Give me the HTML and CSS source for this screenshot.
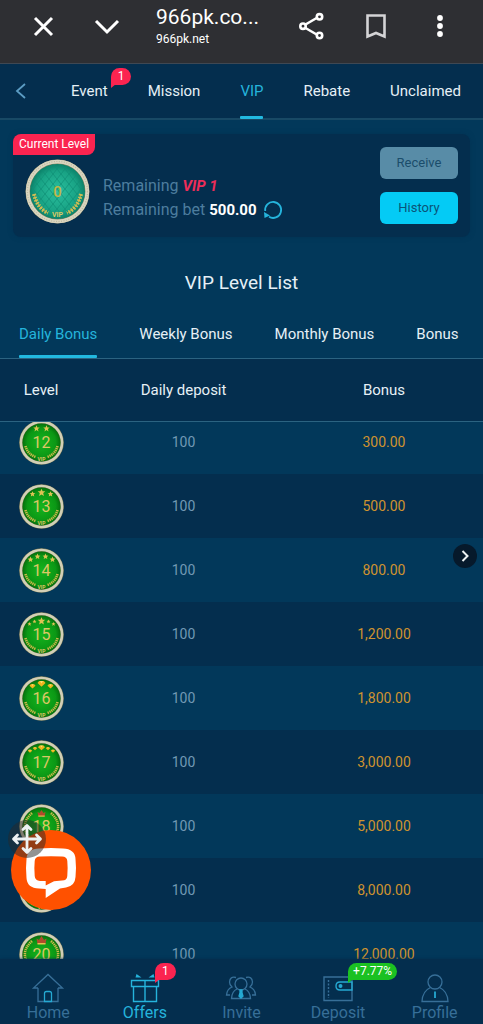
FILE: index.html
```html
<!DOCTYPE html>
<html lang="en">
<head>
  <meta charset="UTF-8">
  <meta name="viewport" content="width=device-width, initial-scale=1.0">
  <title>VIP Level List</title>
  <link rel="stylesheet" href="styles.css">
</head>
<body>
  <div class="app">
    <!-- Browser bar -->
    <header class="browser-bar">
      <div class="bar-group">
        <button class="bar-button" aria-label="Close">
          <svg viewBox="0 0 24 24" fill="none" stroke="currentColor" stroke-width="3"><path d="M4 4l17 17M21 4L4 21"></path></svg>
        </button>
        <button class="bar-button" aria-label="Minimize">
          <svg viewBox="0 0 24 24" fill="none" stroke="currentColor" stroke-width="3"><path d="M1 7l11 11L23 7"></path></svg>
        </button>
      </div>
      <div class="bar-title">
        <div class="site-title">966pk.co...</div>
        <div class="site-url">966pk.net</div>
      </div>
      <div class="bar-group">
        <button class="bar-button" aria-label="Share">
          <svg viewBox="0 0 24 24" fill="none" stroke="currentColor" stroke-width="2.6">
            <path d="M5.5 10.500l12-7M5.500 14l12 7"></path>
            <circle cx="3" cy="12.200" r="2.700"></circle>
            <circle cx="19.500" cy="2.800" r="2.700"></circle>
            <circle cx="19.500" cy="21.500" r="2.700"></circle>
          </svg>
        </button>
        <button class="bar-button bookmark" aria-label="Bookmark">
          <svg viewBox="0 0 24 24" fill="none" stroke="currentColor" stroke-width="2.600"><path d="M3.500 1.500h17V22.500L12 19 3.500 22.500z"></path></svg>
        </button>
        <button class="bar-button" aria-label="More">
          <svg viewBox="0 0 24 24" fill="currentColor"><circle cx="12" cy="4" r="2.900"></circle><circle cx="12" cy="12" r="2.900"></circle><circle cx="12" cy="20" r="2.900"></circle></svg>
        </button>
      </div>
    </header>

    <!-- Main tabs -->
    <nav class="main-tabs">
      <a href="#" class="back" aria-label="Back">
        <svg viewBox="0 0 16 16" fill="none" stroke="currentColor" stroke-width="1.800"><path d="M12 1L4 8l8 7"></path></svg>
      </a>
      <a href="#" class="tab">Event<span class="badge event-badge">1</span></a>
      <a href="#" class="tab">Mission</a>
      <a href="#" class="tab active">VIP</a>
      <a href="#" class="tab">Rebate</a>
      <a href="#" class="tab">Unclaimed</a>
    </nav>

    <!-- Current level -->
    <section class="level-card">
      <span class="level-tag">Current Level</span>
      <svg class="current-coin" viewBox="0 0 65 65">
        <defs>
          <radialGradient id="teal"><stop offset="0" stop-color="#2abf9e"></stop><stop offset="0.750" stop-color="#18a284"></stop><stop offset="1" stop-color="#0b8068"></stop></radialGradient>
          <radialGradient id="green"><stop offset="0" stop-color="#15b41d"></stop><stop offset="0.750" stop-color="#0b9815"></stop><stop offset="1" stop-color="#066f0c"></stop></radialGradient>
          <pattern id="quilt" width="8" height="10" patternUnits="userSpaceOnUse"><path d="M0 0l8 10M8 0L0 10" stroke="#0f8d74" stroke-width="0.700"></path></pattern>
        </defs>
        <circle cx="32.500" cy="32.500" r="32" fill="#8b8763"></circle>
        <circle cx="32.500" cy="32.500" r="29.800" fill="none" stroke="#d9d5c0" stroke-width="3.800"></circle>
        <circle cx="32.500" cy="32.500" r="30" fill="none" stroke="#bdb99e" stroke-width="1.200" stroke-dasharray="1 1.500"></circle>
        <circle cx="32.500" cy="32.500" r="27.500" fill="url(#teal)"></circle>
        <circle cx="32.500" cy="32.500" r="27.500" fill="url(#quilt)"></circle>
        <path d="M9 35q3 14 14 19M56 35q-3 14-14 19" fill="none" stroke="#c8b34a" stroke-width="1"></path>
        <path d="M9 35q3 14 14 19M56 35q-3 14-14 19" fill="none" stroke="#d0bc55" stroke-width="4" stroke-dasharray="1.600 1.400"></path>
        <text x="32.500" y="38" class="coin-zero">0</text>
        <text x="32.500" y="58" class="coin-label">VIP</text>
      </svg>
      <div class="remaining">
        <p>Remaining <em>VIP 1</em></p>
        <p>Remaining bet <strong>500.00</strong>
          <button class="refresh" aria-label="Refresh">
            <svg viewBox="0 0 20 20" fill="none" stroke="currentColor" stroke-width="1.800"><path d="M2.200 11A8 8 0 1 1 6 16.800"></path><path d="M1 12l.5 6 5.500-2.500z" fill="currentColor" stroke="none"></path></svg>
          </button>
        </p>
      </div>
      <div class="card-actions">
        <button class="action receive">Receive</button>
        <button class="action history">History</button>
      </div>
    </section>

    <h1 class="list-title">VIP Level List</h1>

    <nav class="sub-tabs">
      <a href="#" class="tab active">Daily Bonus</a>
      <a href="#" class="tab">Weekly Bonus</a>
      <a href="#" class="tab">Monthly Bonus</a>
      <a href="#" class="tab">Bonus</a>
    </nav>

    <div class="level-scroll" id="level-scroll">
      <table class="level-table">
        <thead>
          <tr><th class="col-level">Level</th><th class="col-deposit">Daily deposit</th><th>Bonus</th></tr>
        </thead>
        <tbody id="level-rows">
          <!-- Level rows are rendered below -->
        </tbody>
      </table>
    </div>

    <!-- Bottom navigation -->
    <nav class="bottom-nav">
      <a href="#" class="nav-item">
        <svg class="nav-icon" viewBox="0 0 32 30" fill="none" stroke="currentColor" stroke-width="1.300">
          <path d="M6 15v13.500h20V15M6 15H1.500L16 1.500 30.500 15H26"></path>
          <path class="accent" d="M12.500 28.500v-8q0-2 2-2h3q2 0 2 2v8z"></path>
        </svg>
        Home
      </a>
      <a href="#" class="nav-item active">
        <svg class="nav-icon" viewBox="0 0 32 30" fill="none" stroke="currentColor" stroke-width="1.400">
          <path d="M2.500 7.500h27v6h-27zM4.500 13.500v15h23v-15M16 7.500v21"></path>
          <path d="M6.500 4.500l1-3.500 5 3.500zM19.500 4.500l5-3.500 1 3.500z" fill="currentColor" stroke="none"></path>
        </svg>
        Offers
        <span class="badge nav-badge">1</span>
      </a>
      <a href="#" class="nav-item">
        <svg class="nav-icon" viewBox="0 0 32 30" fill="none" stroke="currentColor" stroke-width="1.300">
          <circle cx="16" cy="11" r="6"></circle>
          <path d="M12 16q-5 2-5.500 9.500h19q-.5-7.500-5.500-9.500"></path>
          <path d="M11 4.500Q5 3 4.500 9q0 3 2.500 5-5 2-5.500 8H5M21 4.500q6-1.500 6.500 4.500 0 3-2.500 5 5 2 5.500 8H27"></path>
          <path class="accent fill" d="M15 17h2v3l1 3-2 2-2-2 1-3z"></path>
        </svg>
        Invite
      </a>
      <a href="#" class="nav-item">
        <svg class="nav-icon" viewBox="0 0 32 30" fill="none" stroke="currentColor" stroke-width="1.400">
          <path d="M2 4h28v23.500H2z"></path>
          <path d="M6.500 7v18" stroke-dasharray="2 1.500"></path>
          <path class="accent" d="M30 9H18q-4 0-4 4t4 4h12z"></path>
          <circle class="accent fill" cx="18.500" cy="13" r="1.300"></circle>
        </svg>
        Deposit
        <span class="badge nav-badge green">+7.77%</span>
      </a>
      <a href="#" class="nav-item">
        <svg class="nav-icon" viewBox="0 0 32 30" fill="none" stroke="currentColor" stroke-width="1.300">
          <circle cx="16" cy="9" r="7"></circle>
          <path d="M11.500 14.500Q3.500 18 3 28.500h26q-.5-10.500-8.500-14"></path>
          <path class="accent" stroke-width="1.800" d="M16 18.500v6.500"></path>
        </svg>
        Profile
      </a>
    </nav>
  </div>

  <!-- Floating buttons -->
  <button class="side-arrow" aria-label="Open side panel">
    <svg viewBox="0 0 24 24" fill="none" stroke="currentColor" stroke-width="2"><path d="M9.500 7l5 5-5 5"></path></svg>
  </button>
  <button class="chat-button" aria-label="Chat">
    <svg viewBox="0 0 80 80">
      <path fill="#ffffff" fill-rule="evenodd" d="M28 18.500Q40 17.500 52 18.500 64 19 64.500 29 65.500 38 64.500 47 64 56 55 57.500L49 58.500 34.700 68V59L28 58.500Q16 58 15.500 48 14.500 38 15.500 29 16 19 28 18.500zM29 26.500Q24 26.500 23.700 31 23 38 23.700 46 24 50.500 29 51H34.700V55.500L43 51.200 51 50.500Q56 50.500 56.300 46 57 38 56.300 31 56 26.500 51 26.500 40 25.800 29 26.500z"></path>
    </svg>
  </button>
  <button class="move-handle" aria-label="Move chat">
    <svg viewBox="0 0 38 38" fill="none" stroke="currentColor" stroke-width="2.800" stroke-linecap="round" stroke-linejoin="round">
      <path d="M19 6v26M6 19h26M15 9.500L19 5.500l4 4M15 28.500l4 4 4-4M9.500 15l-4 4 4 4M28.500 15l4 4-4 4"></path>
    </svg>
  </button>

  <script>
    const levels = [
      { level: 12, bonus: '300.00', mark: 'star', marks: [[17.5, 8.5, 3.2], [27.5, 8.5, 3.2]] },
      { level: 13, bonus: '500.00', mark: 'star', marks: [[13.5, 10, 2.8], [22.5, 8.5, 3.8], [31.5, 10, 2.8]] },
      { level: 14, bonus: '800.00', mark: 'star', marks: [[11.5, 11.5, 2.9], [18.5, 8.5, 2.9], [26.5, 8.5, 2.9], [33.5, 11.5, 2.9]] },
      { level: 15, bonus: '1,200.00', mark: 'star', marks: [[10.5, 12, 2], [15.5, 9.5, 2], [22.5, 9, 3.8], [29.5, 9.5, 2], [34.5, 12, 2]] },
      { level: 16, bonus: '1,800.00', mark: 'gem', marks: [[13.5, 10, 3], [22.5, 7.5, 4], [31.5, 10, 3]] },
      { level: 17, bonus: '3,000.00', mark: 'gem', marks: [[11, 11, 2.2], [16, 8.5, 2.2], [22.5, 7.5, 3.5], [29, 8.5, 2.2], [34, 11, 2.2]] },
      { level: 18, bonus: '5,000.00', mark: 'crown', marks: [[22.5, 9.5, 4]] },
      { level: 19, bonus: '8,000.00', mark: 'crown', marks: [[22.5, 9.5, 4]] },
      { level: 20, bonus: '12,000.00', mark: 'crown', marks: [[22.5, 8.5, 5]] }
    ];

    const shapes = {
      star: '<path fill="#dfc354" d="M0-1L.3-.35 1-.3.45.15.62.9 0 .5-.62.9-.45.15-1-.3-.3-.35z"/>',
      gem: '<path fill="#efb51d" d="M-.6-.6H.6L1-.1 0 .8-1-.1z"/><path fill="#ffe071" d="M-.4-.6H.4L0 0z"/>',
      crown: '<path fill="#b04b2c" d="M-1-.4l.5.3L0-.9.5-.1l.5-.3-.2 1.100H-.8z"/><path fill="#e2c14e" d="M-.8.500H.8v.3H-.8z"/>'
    };

    function coin(item) {
      const marks = item.marks.map(([x, y, size]) =>
        `<g transform="translate(${x} ${y}) scale(${size})">${shapes[item.mark]}</g>`).join('');
      // Crown levels have laurels that run all the way up
      const laurel = item.mark === 'crown'
        ? 'M13 9Q2 19 8 30q4 6 8 7M32 9q11 10 5 21-4 6-8 7'
        : 'M6.500 26q2 8 10 11M38.500 26q-2 8-10 11';
      return `
        <svg class="coin" viewBox="0 0 45 45">
          <circle cx="22.500" cy="22.500" r="22.300" fill="#817e59"/>
          <circle cx="22.500" cy="22.500" r="20.500" fill="none" stroke="#d2cfb6" stroke-width="2.600"/>
          <circle cx="22.500" cy="22.500" r="19" fill="url(#green)"/>
          <path d="${laurel}" fill="none" stroke="#c9ba4a" stroke-width="2.600" stroke-dasharray="1.300 0.700"/>
          ${marks}
          <text x="22.500" y="27.500" class="coin-number">${item.level}</text>
          <text x="22.500" y="40.500" class="coin-label small">VIP</text>
        </svg>`;
    }

    document.getElementById('level-rows').innerHTML = levels.map(item => `
      <tr>
        <td>${coin(item)}</td>
        <td class="deposit">100</td>
        <td class="bonus">${item.bonus}</td>
      </tr>
    `).join('');

    // Start with level 12 partly under the sticky header
    document.getElementById('level-scroll').scrollTop = 12;
  </script>
</body>
</html>
```
FILE: styles.css
```css
* {
  margin: 0;
  padding: 0;
  box-sizing: border-box;
}

body {
  font-family: Roboto, "Liberation Sans", sans-serif;
  font-size: 15px;
  color: #e6f0f6;
  background-color: #02385a;
}

a {
  color: inherit;
  text-decoration: none;
}

button {
  font: inherit;
  border: none;
  background: none;
  cursor: pointer;
}

svg {
  display: block;
  overflow: visible;
}

.app {
  display: flex;
  flex-direction: column;
  height: 100vh;
}

/* Browser bar */
.browser-bar {
  display: flex;
  gap: 37px;
  padding: 4px 31px 15px;
  background-color: #2e2f33;
  border-bottom: 1px solid #3f4853;
  color: #ffffff;
}

.bar-group {
  display: flex;
  align-items: center;
  gap: 40px;
}

.bar-button {
  width: 24px;
  height: 24px;
  color: #ffffff;
}

.bookmark {
  color: #d4d4d6;
}

.bar-title {
  flex: 1;
  min-width: 0;
  white-space: nowrap;
}

.site-title {
  font-size: 21px;
  line-height: 26px;
}

.site-url {
  font-size: 12px;
  line-height: 18px;
}

/* Tabs */
.main-tabs,
.sub-tabs {
  display: flex;
  white-space: nowrap;
}

.main-tabs {
  gap: 40px;
  height: 56px;
  padding-left: 13px;
  background-color: #042e4e;
  border-bottom: 2px solid #184965;
}

.sub-tabs {
  gap: 42px;
  height: 49px;
  margin-top: 13px;
  padding-left: 19px;
  border-bottom: 1px solid #2b6381;
}

.back {
  display: flex;
  align-items: center;
  width: 18px;
  color: #5c9dc4;
}

.back svg {
  width: 16px;
  height: 16px;
}

.tab {
  position: relative;
  display: flex;
  align-items: center;
}

.tab.active {
  color: #25b4dc;
}

.tab.active::after {
  content: "";
  position: absolute;
  left: 0;
  right: 0;
  bottom: 0;
  height: 3px;
  border-radius: 1px;
  background-color: #22b9e0;
}

.main-tabs .tab.active::after {
  bottom: -1px;
}

.badge {
  position: absolute;
  height: 17px;
  padding: 0 7px;
  border-radius: 9px 9px 9px 0;
  background-color: #fb2450;
  color: #ffffff;
  font-size: 12px;
  line-height: 16px;
}

.badge::after {
  content: "";
  position: absolute;
  left: 0;
  top: 16px;
  border-top: 4px solid #fb2450;
  border-right: 5px solid transparent;
}

.event-badge {
  top: 4px;
  left: 100%;
  margin-left: 3px;
}

/* Current level card */
.level-card {
  position: relative;
  display: flex;
  align-items: flex-end;
  gap: 13px;
  margin: 14px 13px 0;
  padding: 13px 12px;
  border-radius: 8px;
  background-color: #042e4e;
  box-shadow: 0 0 5px #042e4e88;
}

.level-tag {
  position: absolute;
  top: 0;
  left: 0;
  padding: 0 6px;
  border-radius: 8px 0 8px 0;
  background-color: #fb2450;
  color: #ffffff;
  font-size: 12px;
  line-height: 21px;
}

.current-coin {
  width: 65px;
  height: 65px;
}

.remaining {
  flex: 1;
  padding-bottom: 2px;
  color: #4d7d9e;
  font-size: 16px;
  line-height: 24px;
  white-space: nowrap;
}

.remaining p {
  display: flex;
  align-items: center;
  gap: 4px;
}

.remaining em,
.remaining strong {
  font-size: 15px;
}

.remaining em {
  color: #ed2d59;
  font-weight: bold;
}

.remaining strong {
  color: #ffffff;
}

.refresh {
  width: 20px;
  height: 20px;
  margin-left: 2px;
  color: #25b4dc;
}

.card-actions {
  display: flex;
  flex-direction: column;
  gap: 13px;
}

.action {
  width: 78px;
  height: 32px;
  padding-bottom: 2px;
  border-radius: 6px;
  font-size: 13px;
}

.receive {
  background-color: #588ca7;
  color: #1b4d6b;
}

.history {
  background-color: #04cbf5;
  color: #0b5378;
}

.list-title {
  margin-top: 32px;
  font-size: 19px;
  font-weight: normal;
  line-height: 28px;
  text-align: center;
}

/* Level table */
.level-scroll {
  flex: 1;
  min-height: 0;
  overflow-y: auto;
  scrollbar-width: none;
}

.level-table {
  width: 100%;
  border-collapse: separate;
  border-spacing: 0;
  table-layout: fixed;
  text-align: center;
}

.level-table th {
  position: sticky;
  top: 0;
  z-index: 1;
  height: 63px;
  background-color: #042e4e;
  border-bottom: 1px solid #2b6381;
  font-weight: normal;
}

.col-level {
  width: 17%;
}

.col-deposit {
  width: 42%;
}

.level-table td {
  height: 64px;
  font-size: 14px;
}

.level-table tbody tr:nth-child(even) {
  background-color: #042e4e;
}

.deposit {
  color: #7199b4;
}

.bonus {
  color: #cf932f;
}

.coin {
  width: 45px;
  height: 45px;
  margin: 0 auto;
}

.coin-number,
.coin-zero,
.coin-label {
  fill: #dcc766;
  text-anchor: middle;
}

.coin-number {
  font-size: 16px;
}

.coin-zero {
  font-size: 15px;
  font-weight: 500;
  fill: #c3b544;
}

.coin-label {
  font-size: 7px;
  font-weight: bold;
}

.coin-label.small {
  font-size: 5px;
}

/* Bottom navigation */
.bottom-nav {
  display: flex;
  height: 65px;
  background-color: #042e4e;
  box-shadow: 0 0 3px #042e4e;
}

.nav-item {
  position: relative;
  flex: 1;
  display: flex;
  flex-direction: column;
  align-items: center;
  padding-top: 14px;
  color: #376f98;
  font-size: 16px;
  line-height: 20px;
}

.nav-item.active {
  color: #25b4dc;
}

.nav-icon {
  width: 32px;
  height: 30px;
}

.accent {
  stroke: #25a9d2;
}

.accent.fill {
  fill: #25a9d2;
}

.nav-badge {
  top: 4px;
  left: 50%;
  margin-left: 10px;
}

.green {
  padding: 0 5px;
  background-color: #1bc122;
}

.green::after {
  border-top-color: #1bc122;
}

/* Floating buttons */
.side-arrow,
.chat-button,
.move-handle {
  position: fixed;
  border-radius: 50%;
  color: #edf2f3;
}

.side-arrow {
  right: 6px;
  bottom: 456px;
  width: 24px;
  height: 24px;
  background-color: #06192b;
}

.chat-button {
  left: 11px;
  bottom: 114px;
  width: 80px;
  height: 80px;
  background-color: #ff5100;
}

.move-handle {
  left: 8px;
  bottom: 166px;
  width: 38px;
  height: 38px;
  background-color: rgba(40, 40, 40, 0.5);
}
```
